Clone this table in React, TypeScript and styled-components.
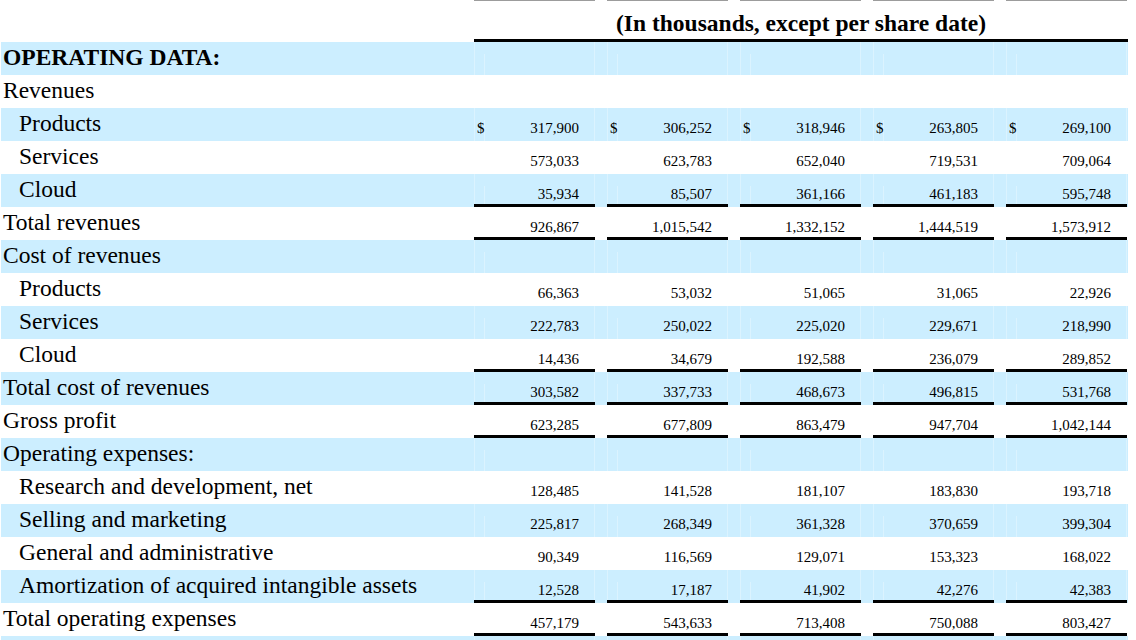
import styled, { createGlobalStyle } from 'styled-components';

const GlobalStyle = createGlobalStyle`
	body {
		margin: 0;
		background: #ffffff;
		color: #000000;
		font-family: 'Liberation Serif', 'Times New Roman', serif;
	}
`;

const Table = styled.div`
	width: 1127px;
	margin-left: 1px;
	height: 640px;
	overflow: hidden;
`;

const Row = styled.div<{ $shade?: boolean }>`
	display: flex;
	height: 33px;
	background: ${(p) => (p.$shade ? '#cceeff' : '#ffffff')};
`;

const TopRule = styled.div`
	display: flex;
	height: 1px;
`;

const HeadRow = styled.div`
	display: flex;
	height: 41px;
`;

const Label = styled.div<{ $indent?: boolean; $bold?: boolean }>`
	flex: none;
	width: 473px;
	box-sizing: border-box;
	padding-left: ${(p) => (p.$indent ? 18 : 2)}px;
	font-size: 23.5px;
	line-height: 30px;
	font-weight: ${(p) => (p.$bold ? 700 : 400)};
	white-space: nowrap;
`;

const Spacer = styled.div`
	flex: none;
	width: 473px;
`;

const Caption = styled.div`
	flex: 1;
	box-sizing: border-box;
	padding-top: 7px;
	line-height: 30px;
	font-size: 23.5px;
	font-weight: 700;
	text-align: center;
	border-bottom: 3px solid #000000;
	white-space: nowrap;
`;

const Groups = styled.div`
	display: flex;
	gap: 12px;
`;

const GrayCap = styled.div`
	width: 121px;
	background: #9c9c9c;
`;

const Group = styled.div<{ $rule?: boolean; $shade?: boolean }>`
	display: flex;
	width: 121px;
	box-sizing: border-box;
	padding-top: 12px;
	font-size: 15px;
	line-height: 17px;
	border-bottom: ${(p) => (p.$rule ? '3px solid #000000' : 'none')};
	box-shadow: ${(p) =>
		p.$shade ? 'inset 1px 0 0 rgba(255,255,255,0.3), inset -1px 0 0 rgba(255,255,255,0.3)' : 'none'};
`;

const Dollar = styled.span<{ $shade?: boolean }>`
	width: 11px;
	padding-left: 3px;
	box-sizing: border-box;
	border-right: 1px solid ${(p) => (p.$shade ? 'rgba(255,255,255,0.3)' : 'transparent')};
`;

const Value = styled.span`
	flex: 1;
	text-align: right;
	padding-right: 16px;
`;

interface Line {
	label: string;
	indent?: boolean;
	bold?: boolean;
	dollar?: boolean;
	rule?: boolean;
	values?: string[];
}

const lines: Line[] = [
	{ label: 'OPERATING DATA:', bold: true },
	{ label: 'Revenues' },
	{ label: 'Products', indent: true, dollar: true, values: ['317,900', '306,252', '318,946', '263,805', '269,100'] },
	{ label: 'Services', indent: true, values: ['573,033', '623,783', '652,040', '719,531', '709,064'] },
	{ label: 'Cloud', indent: true, rule: true, values: ['35,934', '85,507', '361,166', '461,183', '595,748'] },
	{ label: 'Total revenues', rule: true, values: ['926,867', '1,015,542', '1,332,152', '1,444,519', '1,573,912'] },
	{ label: 'Cost of revenues' },
	{ label: 'Products', indent: true, values: ['66,363', '53,032', '51,065', '31,065', '22,926'] },
	{ label: 'Services', indent: true, values: ['222,783', '250,022', '225,020', '229,671', '218,990'] },
	{ label: 'Cloud', indent: true, rule: true, values: ['14,436', '34,679', '192,588', '236,079', '289,852'] },
	{ label: 'Total cost of revenues', rule: true, values: ['303,582', '337,733', '468,673', '496,815', '531,768'] },
	{ label: 'Gross profit', rule: true, values: ['623,285', '677,809', '863,479', '947,704', '1,042,144'] },
	{ label: 'Operating expenses:' },
	{ label: 'Research and development, net', indent: true, values: ['128,485', '141,528', '181,107', '183,830', '193,718'] },
	{ label: 'Selling and marketing', indent: true, values: ['225,817', '268,349', '361,328', '370,659', '399,304'] },
	{ label: 'General and administrative', indent: true, values: ['90,349', '116,569', '129,071', '153,323', '168,022'] },
	{ label: 'Amortization of acquired intangible assets', indent: true, rule: true, values: ['12,528', '17,187', '41,902', '42,276', '42,383'] },
	{ label: 'Total operating expenses', rule: true, values: ['457,179', '543,633', '713,408', '750,088', '803,427'] },
	{ label: '' },
];

const cols = [0, 1, 2, 3, 4];

export default function App() {
	return (
		<>
			<GlobalStyle />
			<Table>
				<TopRule>
					<Spacer />
					<Groups>
						{cols.map((c) => (
							<GrayCap key={c} />
						))}
					</Groups>
				</TopRule>
				<HeadRow>
					<Spacer />
					<Caption>(In thousands, except per share date)</Caption>
				</HeadRow>
				{lines.map((line, i) => {
					const shade = i % 2 === 0;
					return (
						<Row key={i} $shade={shade}>
							<Label $indent={line.indent} $bold={line.bold}>
								{line.label}
							</Label>
							<Groups>
								{cols.map((c) => (
									<Group key={c} $rule={line.rule} $shade={shade}>
										<Dollar $shade={shade}>{line.dollar ? '$' : ''}</Dollar>
										<Value>{line.values ? line.values[c] : ''}</Value>
									</Group>
								))}
							</Groups>
						</Row>
					);
				})}
			</Table>
		</>
	);
}
